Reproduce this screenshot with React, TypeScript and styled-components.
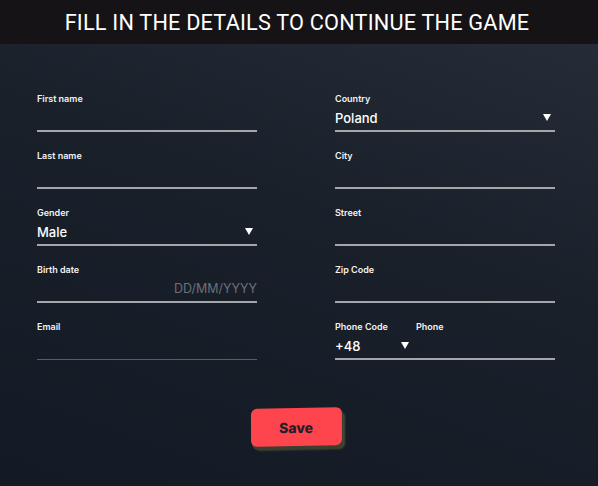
import styled, { createGlobalStyle } from "styled-components";

const GlobalStyle = createGlobalStyle`
  html, body {
    margin: 0;
    padding: 0;
    background: #151b25;
  }
  * {
    box-sizing: border-box;
  }
`;

interface FieldProps {
  label: string;
  value?: string;
  placeholder?: string;
  select?: boolean;
  dim?: boolean;
}

const Field = ({ label, value, placeholder, select, dim }: FieldProps) => (
  <FieldStyle $dim={dim}>
    <div className="field-label">{label}</div>
    <div className="field-input">
      <span className="field-value">{value}</span>
      {placeholder && <span className="field-placeholder">{placeholder}</span>}
      {select && <Arrow />}
    </div>
  </FieldStyle>
);

const Arrow = () => (
  <svg width="8" height="7" viewBox="0 0 8 7">
    <path d="M0 0 L8 0 L4 7 Z" fill="#ffffff" />
  </svg>
);

const App = () => {
  return (
    <>
      <GlobalStyle />
      <Page>
        <Header>FILL IN THE DETAILS TO CONTINUE THE GAME</Header>
        <Form>
          <Column>
            <Field label="First name" />
            <Field label="Last name" />
            <Field label="Gender" value="Male" select />
            <Field label="Birth date" placeholder="DD/MM/YYYY" />
            <Field label="Email" dim />
          </Column>
          <Column>
            <Field label="Country" value="Poland" select />
            <Field label="City" />
            <Field label="Street" />
            <Field label="Zip Code" />
            <PhoneField>
              <div className="phone-labels">
                <span className="code-label">Phone Code</span>
                <span>Phone</span>
              </div>
              <div className="phone-input">
                <span className="code-value">+48</span>
                <Arrow />
              </div>
            </PhoneField>
          </Column>
        </Form>
        <Footer>
          <SaveButton>
            <span>Save</span>
          </SaveButton>
        </Footer>
      </Page>
    </>
  );
};

const Page = styled.div`
  width: 598px;
  height: 486px;
  display: flex;
  flex-direction: column;
  background: linear-gradient(200deg, #272e39 0%, #1a202a 45%, #131a25 100%);
  font-family: "Inter", "Noto Sans", sans-serif;
  color: #ffffff;
  overflow: hidden;
`;

const Header = styled.div`
  height: 44px;
  display: flex;
  align-items: center;
  justify-content: center;
  background: #151315;
  font-family: "Roboto", "Liberation Sans", sans-serif;
  font-size: 21.7px;
  font-weight: 400;
  letter-spacing: 0.2px;
  padding-top: 1px;
  padding-right: 4px;
`;

const Form = styled.div`
  display: grid;
  grid-template-columns: 220px 220px;
  column-gap: 78px;
  padding: 49px 0 0 37px;
`;

const Column = styled.div`
  display: flex;
  flex-direction: column;
  gap: 18px;
`;

const FieldStyle = styled.div<{ $dim?: boolean }>`
  display: flex;
  flex-direction: column;
  height: 39px;
  border-bottom: ${({ $dim }) => ($dim ? "1px solid #5a5f67" : "2px solid #a3a6ab")};

  .field-label {
    font-size: 9px;
    font-weight: 600;
    line-height: 12px;
    color: #f2f2f2;
  }

  .field-input {
    flex: 1;
    display: flex;
    align-items: center;
    justify-content: space-between;
    padding-right: 4px;
  }

  .field-value {
    font-size: 13px;
    font-weight: 500;
  }

  .field-placeholder {
    font-size: 12.5px;
    color: #6b7079;
    margin-right: -4px;
  }
`;

const PhoneField = styled.div`
  display: flex;
  flex-direction: column;
  height: 39px;
  border-bottom: 2px solid #a3a6ab;

  .phone-labels {
    display: flex;
    font-size: 9px;
    font-weight: 600;
    line-height: 12px;
    color: #f2f2f2;
  }

  .code-label {
    width: 81px;
  }

  .phone-input {
    flex: 1;
    display: flex;
    align-items: center;
    font-size: 13px;
    font-weight: 500;
  }

  .code-value {
    width: 66px;
  }
`;

const Footer = styled.div`
  display: flex;
  justify-content: center;
  padding-top: 48px;
  padding-right: 5px;
`;

const SaveButton = styled.button`
  position: relative;
  width: 91px;
  height: 38px;
  border: none;
  border-radius: 6px;
  background: #fe444d;
  cursor: pointer;
  transform: rotate(-1.2deg) skewX(-1deg);
  box-shadow: 1px 3px 0 #3b3e31, 3px 4px 2px rgba(120, 120, 60, 0.5);
  font-family: "Inter", "Noto Sans", sans-serif;
  font-size: 14px;
  font-weight: 800;
  color: #1d1f2b;

  span {
    display: inline-block;
    transform: rotate(1.2deg);
  }
`;

export default App;
